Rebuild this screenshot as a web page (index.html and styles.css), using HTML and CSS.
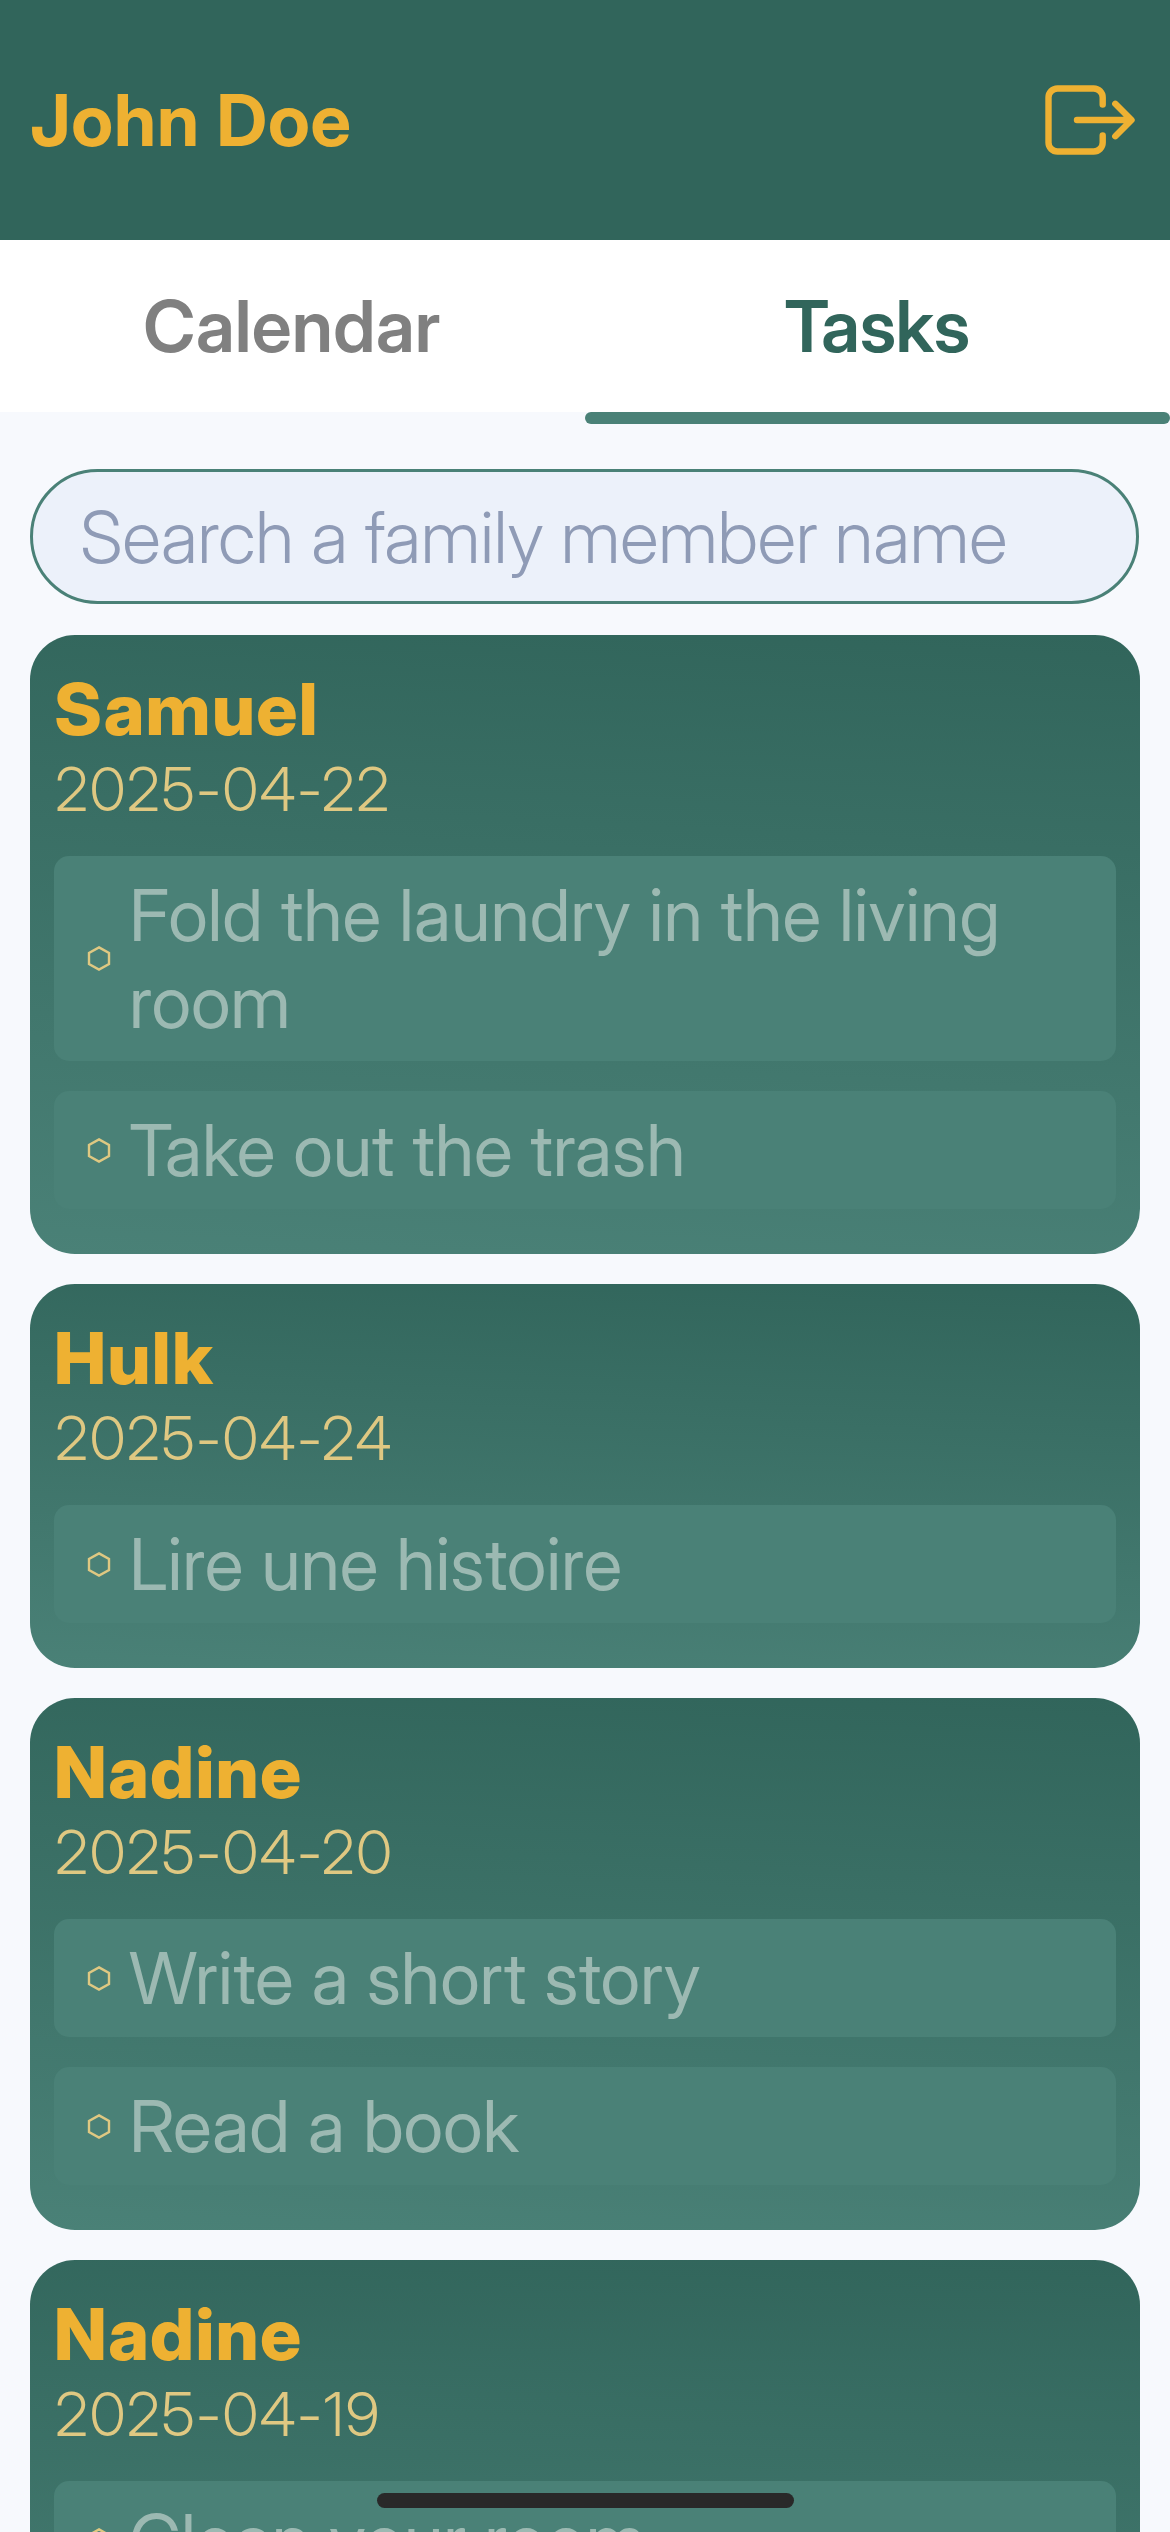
FILE: index.html
```
<!DOCTYPE html>
<html lang="en">
<head>
<meta charset="utf-8">
<title>Tasks</title>
<link rel="stylesheet" href="styles.css">
</head>
<body>
<svg class="sprite" aria-hidden="true">
  <symbol id="hexagon" viewBox="0 -0.5 24 26">
    <path d="M12 1.9 22 7.5v11L12 24.1 2 18.5v-11z" fill="none" stroke="currentColor" stroke-width="2.4"/>
  </symbol>
</svg>
<div class="screen">
  <header class="header">
    <h1 class="header-name">John Doe</h1>
    <svg class="logout" viewBox="0 0 92 72" fill="none" stroke="currentColor" stroke-width="6.4" stroke-linecap="round" stroke-linejoin="round">
      <path d="M58.7 20.5V13.5A9 9 0 0 0 49.7 4.5H13.5A9 9 0 0 0 4.5 13.5V58.5A9 9 0 0 0 13.5 67.5H49.7A9 9 0 0 0 58.7 58.5V51.5"/>
      <path d="M33 36H87M71.3 19.8L87.5 36L71.3 52.2"/>
    </svg>
  </header>
  <nav class="tabs">
    <div class="tab"><span class="tab-text">Calendar</span></div>
    <div class="tab tab-active"><span class="tab-text tab-text-tasks">Tasks</span></div>
  </nav>
  <div class="indicator-row"><div class="indicator"></div></div>
  <main class="content">
    <div class="search" role="searchbox">Search a family member name</div>

    <section class="card">
      <h2 class="card-name">Samuel</h2>
      <p class="card-date">2025-04-22</p>
      <ul class="tasks">
        <li class="task"><svg class="hexagon"><use href="#hexagon"/></svg><span class="task-label">Fold the laundry in the living room</span></li>
        <li class="task"><svg class="hexagon"><use href="#hexagon"/></svg><span class="task-label">Take out the trash</span></li>
      </ul>
    </section>

    <section class="card">
      <h2 class="card-name">Hulk</h2>
      <p class="card-date">2025-04-24</p>
      <ul class="tasks">
        <li class="task"><svg class="hexagon"><use href="#hexagon"/></svg><span class="task-label">Lire une histoire</span></li>
      </ul>
    </section>

    <section class="card">
      <h2 class="card-name">Nadine</h2>
      <p class="card-date">2025-04-20</p>
      <ul class="tasks">
        <li class="task"><svg class="hexagon"><use href="#hexagon"/></svg><span class="task-label">Write a short story</span></li>
        <li class="task"><svg class="hexagon"><use href="#hexagon"/></svg><span class="task-label">Read a book</span></li>
      </ul>
    </section>

    <section class="card card-last">
      <h2 class="card-name">Nadine</h2>
      <p class="card-date">2025-04-19</p>
      <ul class="tasks">
        <li class="task"><svg class="hexagon"><use href="#hexagon"/></svg><span class="task-label">Clean your room</span></li>
      </ul>
    </section>
  </main>
  <div class="home-bar"></div>
</div>
</body>
</html>
```
FILE: styles.css
```
* { box-sizing: border-box; margin: 0; padding: 0; }

body {
  background: #f7f9fd;
  font-family: "Inter Display", Inter, "Liberation Sans", sans-serif;
  font-size: 72px;
  line-height: 87px;
}

.sprite { display: none; }

.screen {
  position: relative;
  display: flex;
  flex-direction: column;
  width: 1170px;
  height: 2532px;
  overflow: hidden;
}

.header {
  flex: none;
  height: 240px;
  padding: 0 34px 0 30px;
  display: flex;
  align-items: center;
  justify-content: space-between;
  background: #31655b;
  color: #eeb132;
}

.header-name {
  padding-bottom: 1px;
  font-size: 72px;
  font-weight: 700;
  letter-spacing: 0.9px;
}

.logout { width: 92px; height: 72px; }

.tabs { flex: none; height: 172px; display: flex; background: #fff; }

.tab {
  flex: 1;
  display: flex;
  align-items: center;
  justify-content: center;
  padding: 0 1px 1px 0;
  color: #808080;
  font-weight: 600;
}

.tab-active { color: #31655b; }
.tab-text { letter-spacing: 0.2px; }
.tab-text-tasks { letter-spacing: -0.4px; }

.indicator-row { flex: none; display: flex; justify-content: flex-end; }
.indicator { width: 50%; height: 12px; border-radius: 6px; background: #4a8177; }

.content {
  flex: none;
  display: flex;
  flex-direction: column;
  padding: 45px 30px 0;
}

.search {
  height: 135px;
  margin: 0 1px 31px 0;
  padding: 21px 47px;
  border: 3px solid #4a8177;
  border-radius: 68px;
  background: #ecf1fa;
  color: #8f9bb6;
  font-weight: 300;
  letter-spacing: -0.08px;
  white-space: nowrap;
}

.card {
  margin-bottom: 30px;
  padding: 30px 24px 45px;
  border-radius: 45px;
  background: linear-gradient(183deg, #31655b, #4a8177);
}

.card-last { min-height: 532px; }

.card-name {
  color: #eeb132;
  font-size: 72px;
  font-weight: 800;
  letter-spacing: 1.3px;
}

.card-date {
  margin: 1px 0 30px 1px;
  color: #dfc882;
  font-size: 60px;
  font-weight: 300;
  line-height: 73px;
  letter-spacing: 1.5px;
}

.tasks { display: flex; flex-direction: column; gap: 30px; list-style: none; }

.task {
  display: flex;
  align-items: center;
  gap: 18px;
  padding: 15px 30px 16px 33px;
  border-radius: 15px;
  background: #4a8177;
}

.hexagon { flex: none; width: 24px; height: 26px; color: #dfc882; }

.task-label { color: #9cb9b2; font-weight: 400; letter-spacing: -0.06px; }

.home-bar {
  position: absolute;
  left: 377px;
  top: 2493px;
  width: 417px;
  height: 15px;
  border-radius: 8px;
  background: #292929;
}
```
